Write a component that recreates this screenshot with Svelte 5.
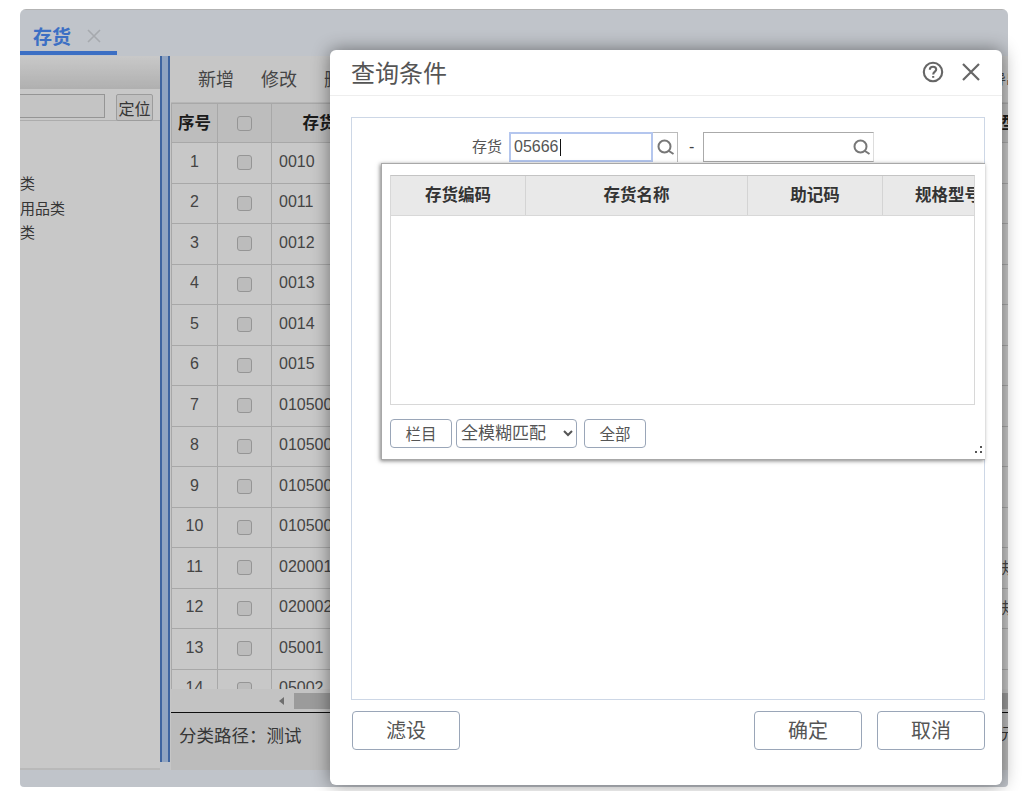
<script>
    const rows = [
        { no: 1, code: "0010" },
        { no: 2, code: "0011" },
        { no: 3, code: "0012" },
        { no: 4, code: "0013" },
        { no: 5, code: "0014" },
        { no: 6, code: "0015" },
        { no: 7, code: "01050001" },
        { no: 8, code: "01050002" },
        { no: 9, code: "01050003" },
        { no: 10, code: "01050004" },
        { no: 11, code: "0200011", spec: "标准规格" },
        { no: 12, code: "0200022", spec: "标准规格" },
        { no: 13, code: "05001" },
        { no: 14, code: "05002" },
    ];
    const tree = ["食品类", "办公用品类", "饮料类"];
</script>

<div class="page">
    <div class="window">
        <!--TABS-->
        <div class="tabs">
            <div class="tab">
                <span>存货</span>
                <svg class="tab_close" width="14" height="14" viewBox="0 0 14 14">
                    <path d="M1 1 L13 13 M13 1 L1 13" />
                </svg>
            </div>
        </div>

        <div class="main">
            <!--LEFT-->
            <div class="side">
                <div class="side_header"></div>
                <div class="side_search">
                    <input class="side_input" type="text" />
                    <button class="side_button">定位</button>
                </div>
                <ul class="tree">
                    {#each tree as item}
                        <li>{item}</li>
                    {/each}
                </ul>
            </div>
            <div class="splitter"></div>

            <!--RIGHT-->
            <div class="content">
                <div class="toolbar">
                    <span>新增</span>
                    <span>修改</span>
                    <span>删除</span>
                    <span class="toolbar_last">导出</span>
                </div>
                <div class="grid">
                    <table>
                        <colgroup>
                            <col style="width: 46px" />
                            <col style="width: 54px" />
                            <col style="width: 128px" />
                            <col style="width: 472px" />
                            <col style="width: 260px" />
                        </colgroup>
                        <thead>
                            <tr>
                                <th>序号</th>
                                <th><span class="check"></span></th>
                                <th>存货编码</th>
                                <th>存货名称</th>
                                <th>规格型号</th>
                            </tr>
                        </thead>
                        <tbody>
                            {#each rows as row}
                                <tr>
                                    <td class="center">{row.no}</td>
                                    <td class="center"><span class="check"></span></td>
                                    <td>{row.code}</td>
                                    <td></td>
                                    <td class="center">{row.spec ?? ""}</td>
                                </tr>
                            {/each}
                        </tbody>
                    </table>
                </div>
                <div class="scrollbar">
                    <span class="scrollbar_arrow"></span>
                    <span class="scrollbar_thumb"></span>
                </div>
                <div class="path">
                    <span>分类路径：测试</span>
                    <span class="path_total">合计：元</span>
                </div>
            </div>
        </div>
        <div class="mask"></div>
    </div>

    <!--DIALOG-->
    <div class="dialog">
        <div class="dialog_header">
            <span class="dialog_title">查询条件</span>
            <svg class="dialog_help" width="22" height="22" viewBox="0 0 22 22">
                <circle cx="11" cy="11" r="9.2" />
                <path d="M7.8 8.8 C7.8 6.8 9.2 5.8 11 5.8 C12.9 5.8 14.2 7 14.2 8.6 C14.2 10.6 11.2 10.8 11.2 13.4" />
                <path d="M11.2 15 V16.8" />
            </svg>
            <svg class="dialog_close" width="18" height="18" viewBox="0 0 18 18">
                <path d="M1 1 L17 17 M17 1 L1 17" />
            </svg>
        </div>

        <div class="dialog_body">
            <div class="panel">
                <div class="query">
                    <span class="query_label">存货</span>
                    <div class="query_from">
                        <input class="query_input" type="text" value="05666" />
                        <span class="query_caret"></span>
                        <span class="query_search">
                            <svg width="24" height="22" viewBox="0 0 24 22">
                                <circle cx="11.5" cy="10.5" r="6" />
                                <path class="handle" d="M16 15 L20.5 18" />
                            </svg>
                        </span>
                    </div>
                    <span class="query_dash">-</span>
                    <div class="query_to">
                        <svg width="24" height="22" viewBox="0 0 24 22">
                            <circle cx="11.5" cy="10.5" r="6" />
                            <path class="handle" d="M16 15 L20.5 18" />
                        </svg>
                    </div>
                </div>

                <div class="popup">
                    <div class="popup_table">
                        <div class="popup_head">
                            <span style="width: 135px">存货编码</span>
                            <span style="width: 222px">存货名称</span>
                            <span style="width: 135px">助记码</span>
                            <span class="popup_clip" style="width: 92px">规格型号</span>
                        </div>
                    </div>
                    <div class="popup_footer">
                        <button>栏目</button>
                        <select>
                            <option>全模糊匹配</option>
                            <option>左匹配</option>
                        </select>
                        <button>全部</button>
                    </div>
                    <svg class="popup_grip" width="10" height="10" viewBox="0 0 10 10">
                        <rect x="6" y="1" width="2" height="2" />
                        <rect x="6" y="6" width="2" height="2" />
                        <rect x="1" y="6" width="2" height="2" />
                    </svg>
                </div>
            </div>
        </div>

        <div class="dialog_footer">
            <button>滤设</button>
            <button class="push">确定</button>
            <button>取消</button>
        </div>
    </div>
</div>

<style>
    :global(body) {
        margin: 0;
        background: #fff;
    }
    .page {
        position: relative;
        height: 791px;
        overflow: hidden;
        font-family: "Liberation Sans", "Noto Sans CJK SC", sans-serif;
        color: #444;
    }
    .window {
        position: relative;
        margin: 9px 27px 0 20px;
        height: 778px;
        background: #f0f5fd;
        border-radius: 6px 6px 4px 4px;
        overflow: hidden;
    }
    .mask {
        position: absolute;
        inset: 0;
        background: rgba(0, 0, 0, 0.2);
    }

    /* tabs */
    .tabs {
        height: 47px;
        box-sizing: border-box;
        border-top: 1px solid #e0e0e0;
    }
    .tab {
        display: flex;
        align-items: center;
        gap: 16px;
        width: 97px;
        height: 45px;
        box-sizing: border-box;
        padding: 10px 0 0 13px;
        border-bottom: 4px solid #4b8bf5;
        color: #4b8bf5;
        font-size: 19px;
        font-weight: bold;
    }
    .tab_close path {
        fill: none;
        stroke: #d0d4da;
        stroke-width: 1.6;
    }

    .main {
        display: flex;
        height: 714px;
    }

    /* left side */
    .side {
        width: 140px;
        height: 712px;
        flex: none;
        background: #fbfbfb;
        border-bottom: 2px solid #e8e8e8;
        box-sizing: content-box;
    }
    .side_header {
        height: 33px;
        background: linear-gradient(#fbfbfb, #dcdcdc);
    }
    .side_search {
        display: flex;
        align-items: flex-start;
        gap: 11px;
        height: 32px;
        padding-top: 5px;
        box-sizing: border-box;
        border-bottom: 1px solid #d8d8d8;
    }
    .side_input {
        flex: 1;
        min-width: 0;
        height: 24px;
        margin-left: -20px;
        box-sizing: border-box;
        border: 1px solid #bbb;
        background: #f6f6f6;
    }
    .side_button {
        width: 37px;
        height: 27px;
        margin-right: 7px;
        padding: 0;
        flex: none;
        border: 1px solid #c4c4c4;
        border-radius: 2px;
        background: #f0f0f0;
        font: 16px "Liberation Sans", "Noto Sans CJK SC", sans-serif;
        color: #444;
    }
    .tree {
        list-style: none;
        margin: 0 0 0 -30px;
        padding: 51px 0 0;
        font-size: 15px;
        line-height: 24.5px;
        white-space: nowrap;
    }

    .splitter {
        width: 10px;
        height: 706px;
        flex: none;
        box-sizing: border-box;
        background: #b4cdf2;
        border-left: 2px solid #4f7fc8;
        border-right: 2px solid #4f7fc8;
    }

    /* right side */
    .content {
        flex: 1;
        min-width: 0;
        padding-left: 1px;
        display: flex;
        flex-direction: column;
        background: #f8f8f8;
    }
    .toolbar {
        display: flex;
        align-items: center;
        gap: 27px;
        height: 47px;
        flex: none;
        padding: 0 0 2px 27px;
        box-sizing: border-box;
        font-size: 18px;
        color: #555;
        border-bottom: 1px solid #e4e4e4;
    }
    .toolbar_last {
        margin-left: auto;
        margin-right: -12px;
        font-size: 14px;
    }
    .grid {
        height: 586px;
        flex: none;
        overflow: hidden;
    }
    table {
        border-collapse: collapse;
        table-layout: fixed;
        width: 960px;
    }
    th {
        height: 39px;
        padding: 0 0 2px;
        box-sizing: border-box;
        background: #ededed;
        border: 1px solid #d2d2d2;
        font-size: 16.5px;
        color: #222;
        white-space: nowrap;
    }
    td {
        height: 40.5px;
        box-sizing: border-box;
        padding: 0 7px 2px;
        background: #fbfbfb;
        border: 1px solid #d2d2d2;
        font-size: 16px;
        color: #555;
        white-space: nowrap;
    }
    td.center {
        text-align: center;
        padding: 0 0 2px;
    }
    .check {
        display: inline-block;
        width: 15px;
        height: 15px;
        box-sizing: border-box;
        vertical-align: middle;
        border: 1px solid #bbb;
        border-radius: 3px;
        background: #ececec;
    }
    .scrollbar {
        display: flex;
        align-items: center;
        height: 23px;
        flex: none;
        padding-left: 108px;
        background: #f4f4f4;
        overflow: hidden;
    }
    .scrollbar_arrow {
        width: 0;
        height: 0;
        border: 4px solid transparent;
        border-left: 0;
        border-right: 5px solid #8a8a8a;
    }
    .scrollbar_thumb {
        flex: 1;
        height: 16px;
        margin-left: 10px;
        background: #c2c2c2;
    }
    .path {
        display: flex;
        justify-content: space-between;
        height: 58px;
        flex: none;
        box-sizing: border-box;
        padding: 9px 0 0 8px;
        border-top: 1px solid #111;
        background: #ececec;
        font-size: 17.5px;
    }
    .path_total {
        margin-right: -8px;
        font-size: 15px;
    }

    /* dialog */
    .dialog {
        position: absolute;
        left: 330px;
        top: 50px;
        width: 672px;
        height: 735px;
        display: flex;
        flex-direction: column;
        background: #fff;
        border-radius: 6px;
        box-shadow: 0 0 18px rgba(0, 0, 0, 0.45);
    }
    .dialog_header {
        display: flex;
        align-items: center;
        height: 46px;
        flex: none;
        box-sizing: border-box;
        padding: 0 22px 2px 21px;
        border-bottom: 1px solid #eee;
    }
    .dialog_title {
        flex: 1;
        font-size: 24px;
        color: #555;
    }
    .dialog_help {
        margin-right: 18px;
    }
    .dialog_help circle,
    .dialog_help path {
        fill: none;
        stroke: #666;
        stroke-width: 2.1;
    }
    .dialog_close path {
        fill: none;
        stroke: #666;
        stroke-width: 2.2;
    }
    .dialog_body {
        flex: 1;
        min-height: 0;
        padding: 21px 17px 0 21px;
    }
    .panel {
        position: relative;
        height: 100%;
        box-sizing: border-box;
        border: 1px solid #cdd7e6;
    }
    .query {
        display: flex;
        align-items: flex-start;
        padding: 14px 0 0 120px;
    }
    .query_label {
        width: 37px;
        flex: none;
        font-size: 15px;
        line-height: 30px;
        color: #555;
    }
    .query_from {
        position: relative;
        display: flex;
        width: 169px;
        height: 30px;
    }
    .query_input {
        width: 144px;
        height: 30px;
        padding: 0 0 0 3px;
        box-sizing: border-box;
        border: 2px solid #b4c6ee;
        outline: none;
        font: 16px "Liberation Sans", sans-serif;
        color: #555;
    }
    .query_caret {
        position: absolute;
        left: 51px;
        top: 7px;
        width: 1px;
        height: 17px;
        background: #111;
    }
    .query_search {
        width: 25px;
        height: 30px;
        box-sizing: border-box;
        border-top: 1px solid #bbb;
        border-right: 1px solid #bbb;
    }
    .query svg {
        display: block;
        margin-top: 3px;
    }
    .query circle,
    .handle {
        fill: none;
        stroke: #777;
        stroke-width: 2;
    }
    .query_dash {
        width: 25px;
        flex: none;
        padding-left: 11px;
        box-sizing: border-box;
        line-height: 30px;
        font-size: 16px;
    }
    .query_to {
        display: flex;
        justify-content: flex-end;
        width: 171px;
        height: 30px;
        box-sizing: border-box;
        border: 1px solid #aaa;
        border-right-color: #ddd;
    }
    .popup {
        position: absolute;
        left: 29px;
        top: 45px;
        right: -1px;
        height: 297px;
        box-sizing: border-box;
        padding: 11px 10px 0 8px;
        background: #fff;
        border: 1px solid #a8a8a8;
        border-right: 0;
        box-shadow: -1px 1px 4px rgba(0, 0, 0, 0.5);
    }
    .popup_table {
        height: 230px;
        box-sizing: border-box;
        border: 1px solid #d8d8d8;
        border-top-color: #c4c4c4;
        overflow: hidden;
    }
    .popup_head {
        display: flex;
        height: 39px;
        background: #e9e9e9;
        border-bottom: 1px solid #d8d8d8;
    }
    .popup_head span {
        flex: none;
        box-sizing: border-box;
        border-right: 1px solid #d4d4d4;
        text-align: center;
        line-height: 38px;
        font-size: 16.5px;
        font-weight: bold;
        color: #333;
    }
    .popup_head .popup_clip {
        padding-left: 32px;
        text-align: left;
        white-space: nowrap;
        border-right: 0;
        overflow: hidden;
    }
    .popup_footer {
        display: flex;
        align-items: flex-start;
        margin-top: 14px;
    }
    .popup_footer button {
        width: 62px;
        height: 29px;
        padding: 0 0 2px;
        background: #fff;
        border: 1px solid #9aa6b8;
        border-radius: 4px;
        font: 15.5px "Liberation Sans", "Noto Sans CJK SC", sans-serif;
        color: #555;
    }
    .popup_footer select {
        width: 121px;
        height: 29px;
        margin: 0 7px 0 4px;
        padding: 0;
        background: #fff;
        border: 1px solid #9aa6b8;
        border-radius: 4px;
        font: 17px "Liberation Sans", "Noto Sans CJK SC", sans-serif;
        color: #555;
    }
    .popup_grip {
        position: absolute;
        right: 1px;
        bottom: 4px;
        fill: #555;
    }
    .dialog_footer {
        display: flex;
        gap: 15px;
        padding: 11px 17px 35px 22px;
    }
    .dialog_footer button {
        width: 108px;
        height: 39px;
        padding: 0 0 2px;
        background: #fff;
        border: 1px solid #9aa6b8;
        border-radius: 4px;
        font: 20px "Liberation Sans", "Noto Sans CJK SC", sans-serif;
        color: #555;
    }
    .dialog_footer .push {
        margin-left: auto;
    }
</style>
